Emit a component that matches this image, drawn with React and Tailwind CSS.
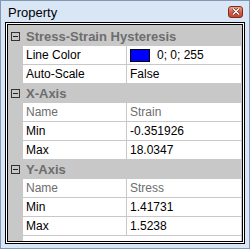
// Fenêtre "Property" — grille de propriétés façon WinForms
const groups = [
  {
    title: 'Stress-Strain Hysteresis',
    rows: [
      { name: 'Line Color', value: '0; 0; 255', color: '#0000ff' },
      { name: 'Auto-Scale', value: 'False' },
    ],
  },
  {
    title: 'X-Axis',
    rows: [
      { name: 'Name', value: 'Strain', readOnly: true },
      { name: 'Min', value: '-0.351926' },
      { name: 'Max', value: '18.0347' },
    ],
  },
  {
    title: 'Y-Axis',
    rows: [
      { name: 'Name', value: 'Stress', readOnly: true },
      { name: 'Min', value: '1.41731' },
      { name: 'Max', value: '1.5238' },
    ],
  },
]

function Collapse() {
  return (
    <span className="w-[9px] h-[9px] border border-[#333] bg-[#c8c8c8] flex items-center justify-center">
      <span className="w-[5px] h-px bg-[#222]" />
    </span>
  )
}

function CloseButton() {
  return (
    <div className="w-[15px] h-[12px] rounded-[3px] border border-[#7a2e22] bg-gradient-to-b from-[#eaa08c] via-[#d5604a] to-[#c2432e] flex items-center justify-center">
      <svg width="8" height="7" viewBox="0 0 8 7">
        <path d="M1 0.5 L7 6.5 M7 0.5 L1 6.5" stroke="#5a1a10" strokeWidth="2.6" />
        <path d="M1 0.5 L7 6.5 M7 0.5 L1 6.5" stroke="#fff" strokeWidth="1.5" />
      </svg>
    </div>
  )
}

export default function App() {
  return (
    <div
      className="w-[250px] h-[249px] border border-[#8497b0] bg-[#d8e6f6] flex flex-col text-[12px] leading-none"
      style={{ fontFamily: '"Liberation Sans", Arial, sans-serif' }}
    >
      {/* barre de titre */}
      <div className="h-[21px] flex items-center justify-between pl-[7px] pr-[6px]">
        <span className="text-black text-[13px] pt-[1px]">Property</span>
        <CloseButton />
      </div>

      {/* zone client avec double bordure */}
      <div className="flex-1 mx-[4px] mb-[4px] border-[3px] border-double border-black bg-white flex flex-col">
        <div className="flex-1 flex flex-col pt-[2px] bg-[#c8c8c8]">
          {groups.map((g) => (
            <div key={g.title}>
              <div className="h-[19px] flex items-center">
                <div className="w-[15px] flex justify-center">
                  <Collapse />
                </div>
                <span className="pl-[3px] font-bold text-[13px] text-[#6d6d6d]">{g.title}</span>
              </div>
              {g.rows.map((r) => (
                <div key={g.title + r.name} className="h-[19px] flex border-b border-[#c8c8c8]">
                  <div className="w-[15px] shrink-0" />
                  <div className={`w-[103px] bg-white flex items-center pl-[3px] ${r.readOnly ? 'text-[#6d6d6d]' : 'text-black'}`}>
                    {r.name}
                  </div>
                  <div className="w-px bg-[#c8c8c8]" />
                  <div className={`flex-1 bg-white flex items-center pl-[3px] ${r.readOnly ? 'text-[#6d6d6d]' : 'text-black'}`}>
                    {r.color && (
                      <span className="w-[20px] h-[13px] border border-black mr-[7px]" style={{ background: r.color }} />
                    )}
                    {r.value}
                  </div>
                  <div className="w-px bg-[#c8c8c8]" />
                </div>
              ))}
            </div>
          ))}
          <div className="flex-1 flex">
            <div className="w-[15px]" />
            <div className="flex-1 bg-white" />
            <div className="w-px" />
          </div>
        </div>
      </div>
    </div>
  )
}
